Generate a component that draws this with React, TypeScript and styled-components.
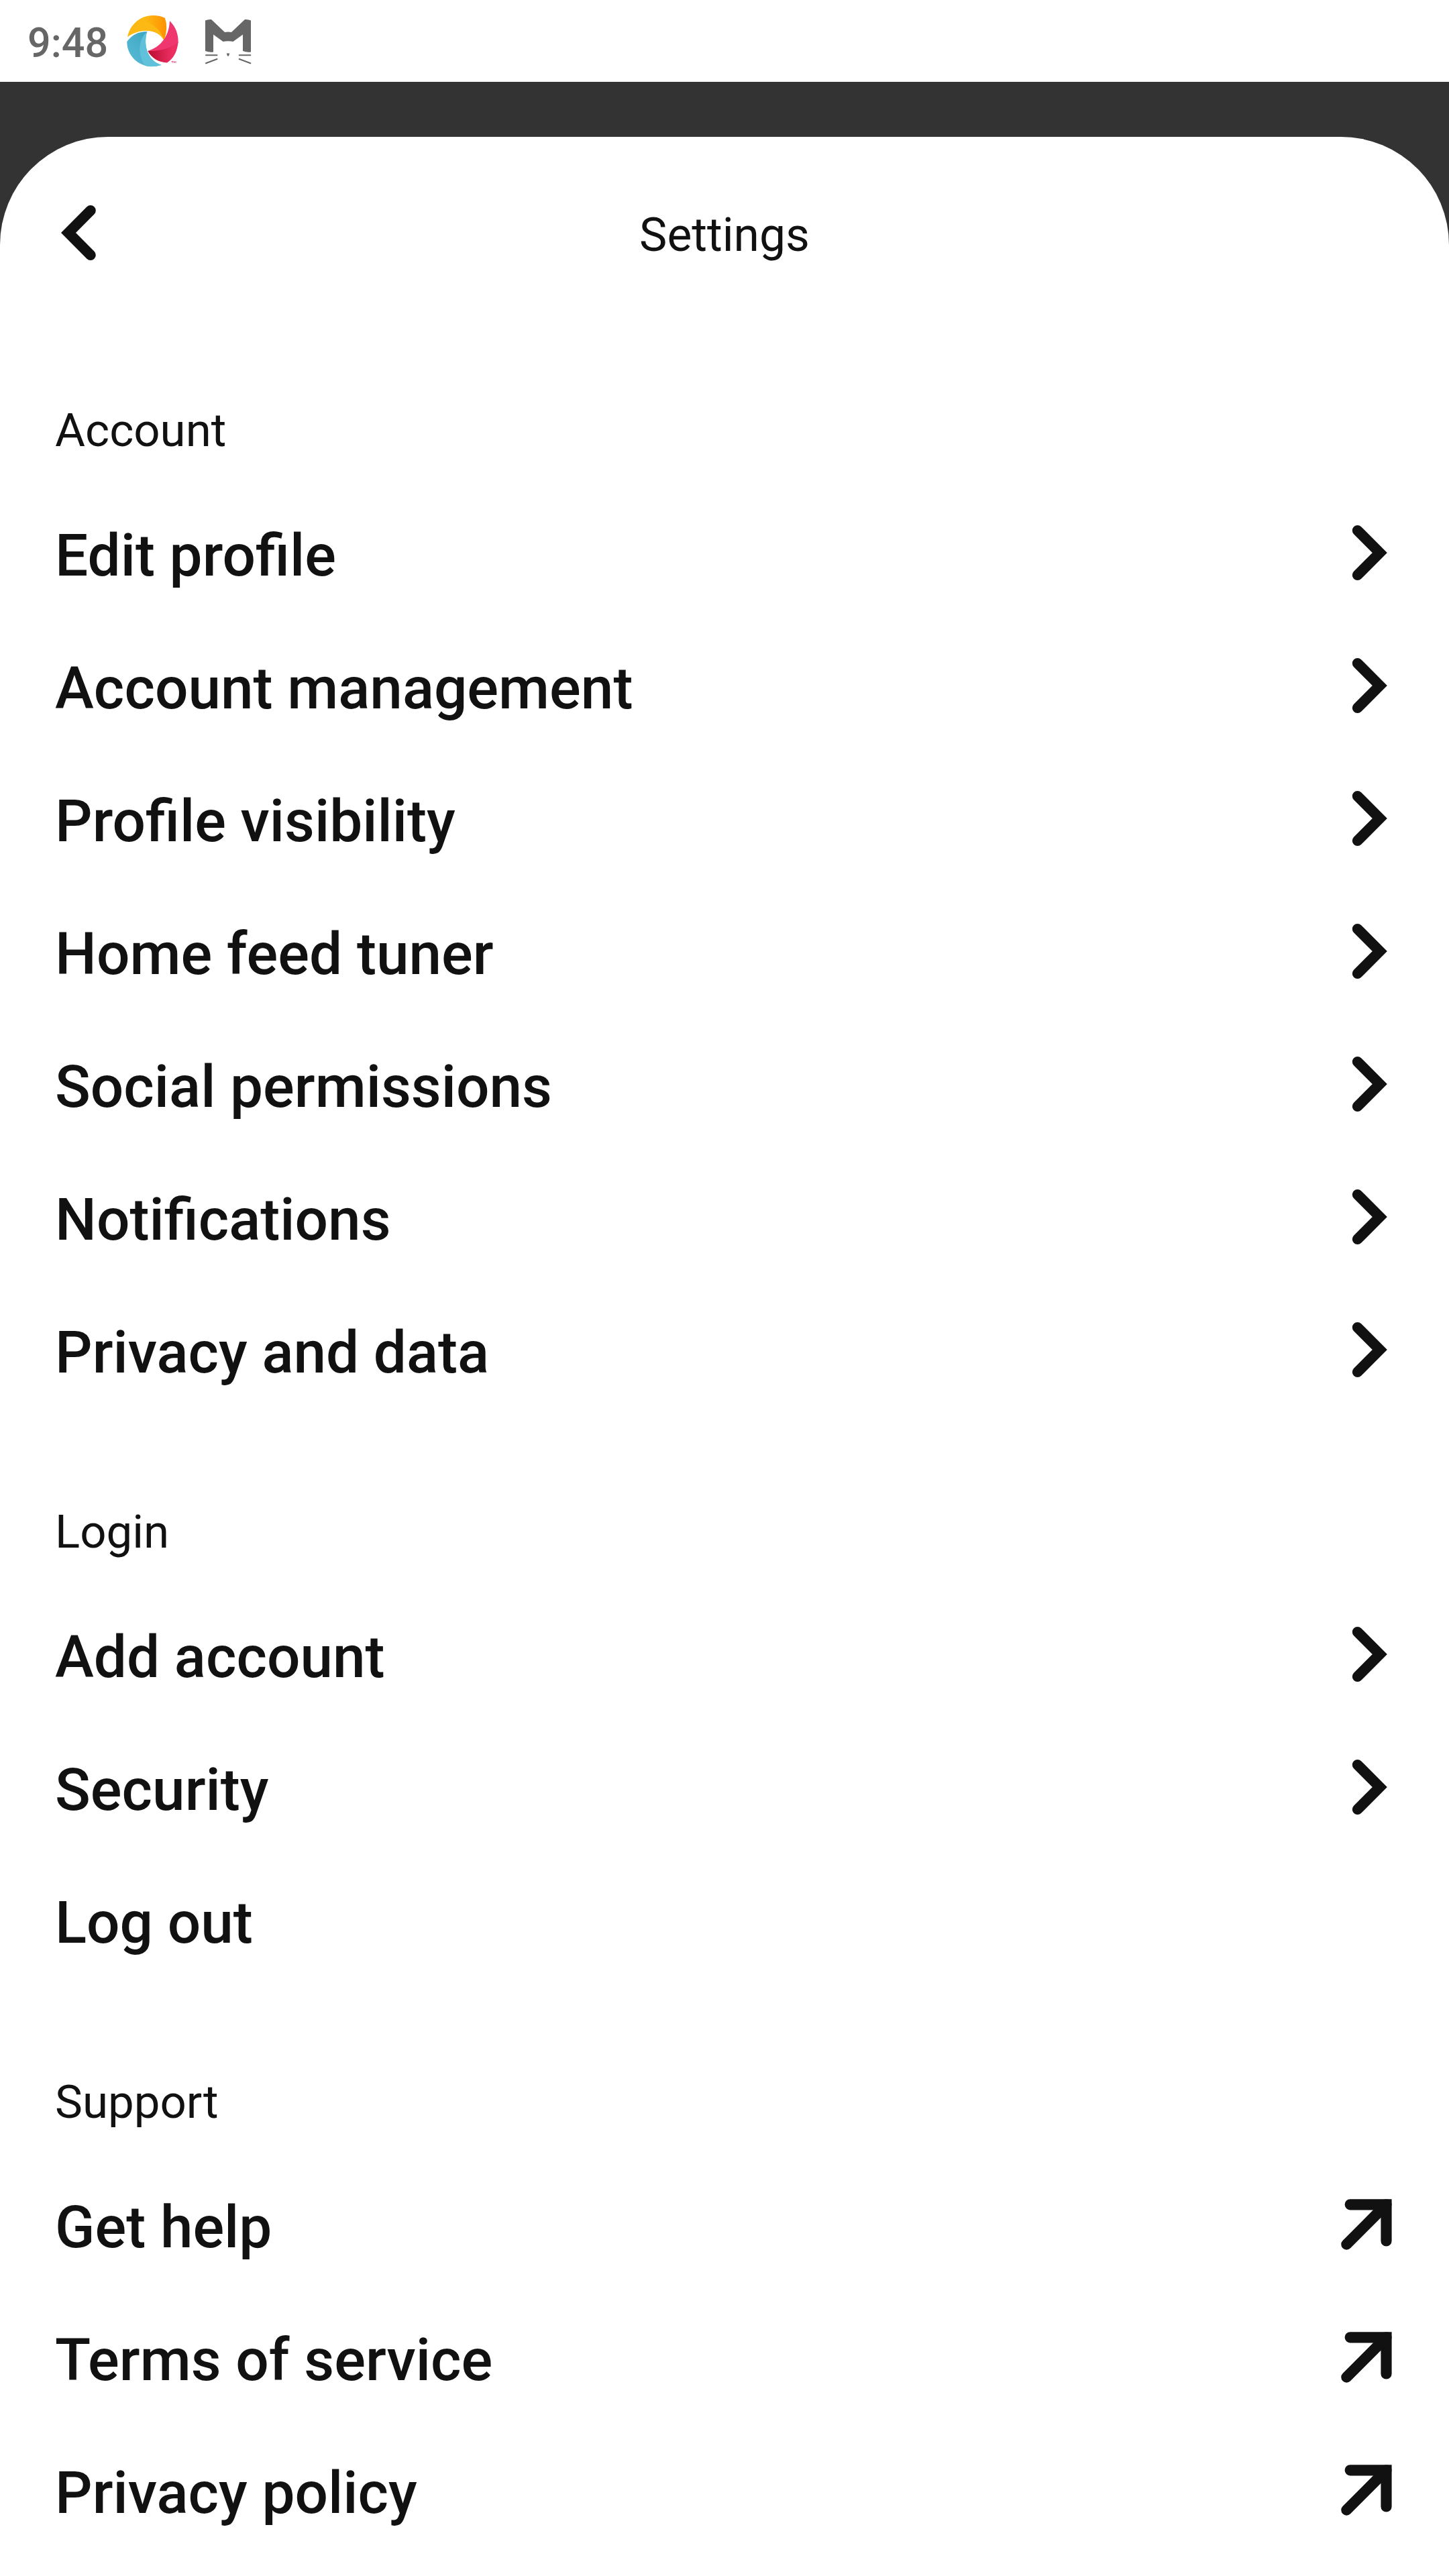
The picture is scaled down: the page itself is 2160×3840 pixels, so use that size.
import React from "react";
import styled, { createGlobalStyle } from "styled-components";

const GlobalStyle = createGlobalStyle`
  * { box-sizing: border-box; }
  body { margin: 0; background: #fff; font-family: Roboto, "Noto Sans", sans-serif; }
`;

const Screen = styled.div`
  width: 2160px;
  height: 3840px;
  overflow: hidden;
  display: flex;
  flex-direction: column;
  background: #333;
  color: #111;
`;

const StatusBar = styled.header`
  flex: none;
  height: 122px;
  display: flex;
  align-items: center;
  padding-left: 41px;
  background: #fff;
`;

const Clock = styled.span`
  width: 143px;
  padding-top: 5px;
  font-size: 61px;
  font-weight: 500;
  line-height: 74px;
  color: #666;
`;

const StatusIcon = styled.svg`
  display: block;
  flex: none;
`;

const Sheet = styled.main`
  flex: 1;
  margin-top: 82px;
  border-radius: 161px 161px 0 0;
  background: #fff;
`;

const TitleBar = styled.div`
  height: 289px;
  display: grid;
  grid-template-columns: 200px 1fr 200px;
  align-items: center;
`;

const BackButton = styled.button`
  padding: 5px 0 0 82px;
  border: 0;
  background: none;
  line-height: 0;
`;

const Title = styled.h1`
  margin: 0;
  padding-top: 4px;
  text-align: center;
  font-size: 69.5px;
  font-weight: 400;
  line-height: 81px;
`;

const Section = styled.section<{ $gap?: number }>`
  padding: ${(p) => p.$gap ?? 0}px 82px 0;
`;

const SectionTitle = styled.h2`
  margin: 0;
  height: 81px;
  font-size: 69px;
  font-weight: 400;
  line-height: 81px;
`;

const Rows = styled.ul`
  margin: 0;
  padding: 47px 0 0;
  list-style: none;
`;

const Row = styled.li`
  height: 198px;
  display: flex;
  align-items: center;
  justify-content: space-between;
`;

const RowLabel = styled.span`
  font-size: 87.25px;
  font-weight: 500;
  line-height: 102px;
`;

const RowIcon = styled.svg`
  display: block;
  width: 82px;
  height: 82px;
  margin-bottom: 8px;
  overflow: visible;
`;

const Chevron = ({ back = false }: { back?: boolean }) => (
  <RowIcon viewBox="0 0 82 82" fill="none" stroke="#111" strokeWidth="15.6" strokeLinecap="round">
    <path d={back ? "M53 7.7L20 41L53 74.3" : "M27.6 7.7L60.8 41L27.6 74.3"} />
  </RowIcon>
);

const Arrow = () => (
  <RowIcon viewBox="0 0 82 82" fill="none" stroke="#111" strokeWidth="16.2" strokeLinecap="round">
    <path d="M16.7 11.3H70.5V65.4" />
    <path d="M70.5 11.3L11.3 70.6" />
  </RowIcon>
);

const SwirlLogo = () => (
  <StatusIcon width="88" height="88" viewBox="184 17 88 88">
    <defs>
      <linearGradient id="amber" x1="0" x2="1">
        <stop offset=".45" stopColor="#fdb913" />
        <stop offset="1" stopColor="#ff9100" />
      </linearGradient>
      <linearGradient id="sea" x1="1" y1="0" x2="0" y2="1">
        <stop offset="0" stopColor="#35a0bb" />
        <stop offset="1" stopColor="#5bbdd8" />
      </linearGradient>
      <linearGradient id="ruby" x1="0" x2="1">
        <stop offset="0" stopColor="#b90e31" />
        <stop offset=".8" stopColor="#ec2e62" />
      </linearGradient>
    </defs>
    <path fill="url(#amber)" d="M190.3 55C193 38 208 23 228 23Q239 23 246 27Q251 42 244.7 60.3C238 48 225 43 207 47Q196 50 190.3 55Z" />
    <path fill="#fdb913" d="M190.3 55C193 43 200 35 208 31C226 32 240 44 244.7 60.3C238 48 225 43 207 47Q196 50 190.3 55Z" />
    <path fill="url(#sea)" d="M189.3 62Q200 47 219.3 47C213 67 220 91 240.7 96.7C214 106 189 87 189.3 62Z" />
    <path fill="#62c1da" d="M219.3 47C213 67 220 91 240.7 96.7Q228 101 216 98C204 79 207 58 219.3 47Z" />
    <path fill="url(#ruby)" d="M220.3 76Q243 75 265.5 63C264 78 258 88 249 93.5C237 93 226 87 220.3 76Z" />
    <path fill="#ef366e" d="M253 31.3C262 40 266 51 265.7 64C255 71 238 77 220.3 76C240 70 252 54 253 31.3Z" />
    <path stroke="#ef366e" strokeWidth=".8" fill="none" d="M255.5 91.5H258.5M257 91.5V94M259.5 94V91.5L260.7 93L262 91.5V94" />
  </StatusIcon>
);

const CatLogo = () => (
  <StatusIcon width="88" height="88" viewBox="296 17 88 88">
    <path fill="#666" d="M306 30.5Q310 28.6 315 29L335 48Q340 47.2 345 48L365 29Q370 28.6 374 30.5V77.5Q368 78.5 362 76V51.5L347.5 62Q340 60.5 332.5 62L318 51.5V77.5Q312 78.3 306 76Z" />
    <path fill="#666" d="M337.8 79.5H342.2L341 83.5H339Z" />
    <path stroke="#666" strokeWidth="2" strokeLinecap="round" fill="none" d="M307 82.3H323.5M307 94.3L323.5 88M356.7 82.3H373.3M356.7 88L373.3 94.3" />
  </StatusIcon>
);

type Item = { label: string; icon?: "chevron" | "arrow" };
type Group = { title: string; gap: number; items: Item[] };

const to = (label: string): Item => ({ label, icon: "chevron" });
const out = (label: string): Item => ({ label, icon: "arrow" });

const groups: Group[] = [
  {
    title: "Account",
    gap: 108,
    items: [
      "Edit profile",
      "Account management",
      "Profile visibility",
      "Home feed tuner",
      "Social permissions",
      "Notifications",
      "Privacy and data",
    ].map(to),
  },
  { title: "Login", gap: 128, items: [to("Add account"), to("Security"), { label: "Log out" }] },
  { title: "Support", gap: 128, items: ["Get help", "Terms of service", "Privacy policy"].map(out) },
];

export default function App() {
  return (
    <>
      <GlobalStyle />
      <Screen>
        <StatusBar>
          <Clock>9:48</Clock>
          <SwirlLogo />
          <StatusIcon width="24" height="88" />
          <CatLogo />
        </StatusBar>
        <Sheet>
          <TitleBar>
            <BackButton aria-label="Back">
              <Chevron back />
            </BackButton>
            <Title>Settings</Title>
          </TitleBar>
          {groups.map((group) => (
            <Section key={group.title} $gap={group.gap}>
              <SectionTitle>{group.title}</SectionTitle>
              <Rows>
                {group.items.map(({ label, icon }) => (
                  <Row key={label}>
                    <RowLabel>{label}</RowLabel>
                    {icon === "chevron" && <Chevron />}
                    {icon === "arrow" && <Arrow />}
                  </Row>
                ))}
              </Rows>
            </Section>
          ))}
        </Sheet>
      </Screen>
    </>
  );
}
